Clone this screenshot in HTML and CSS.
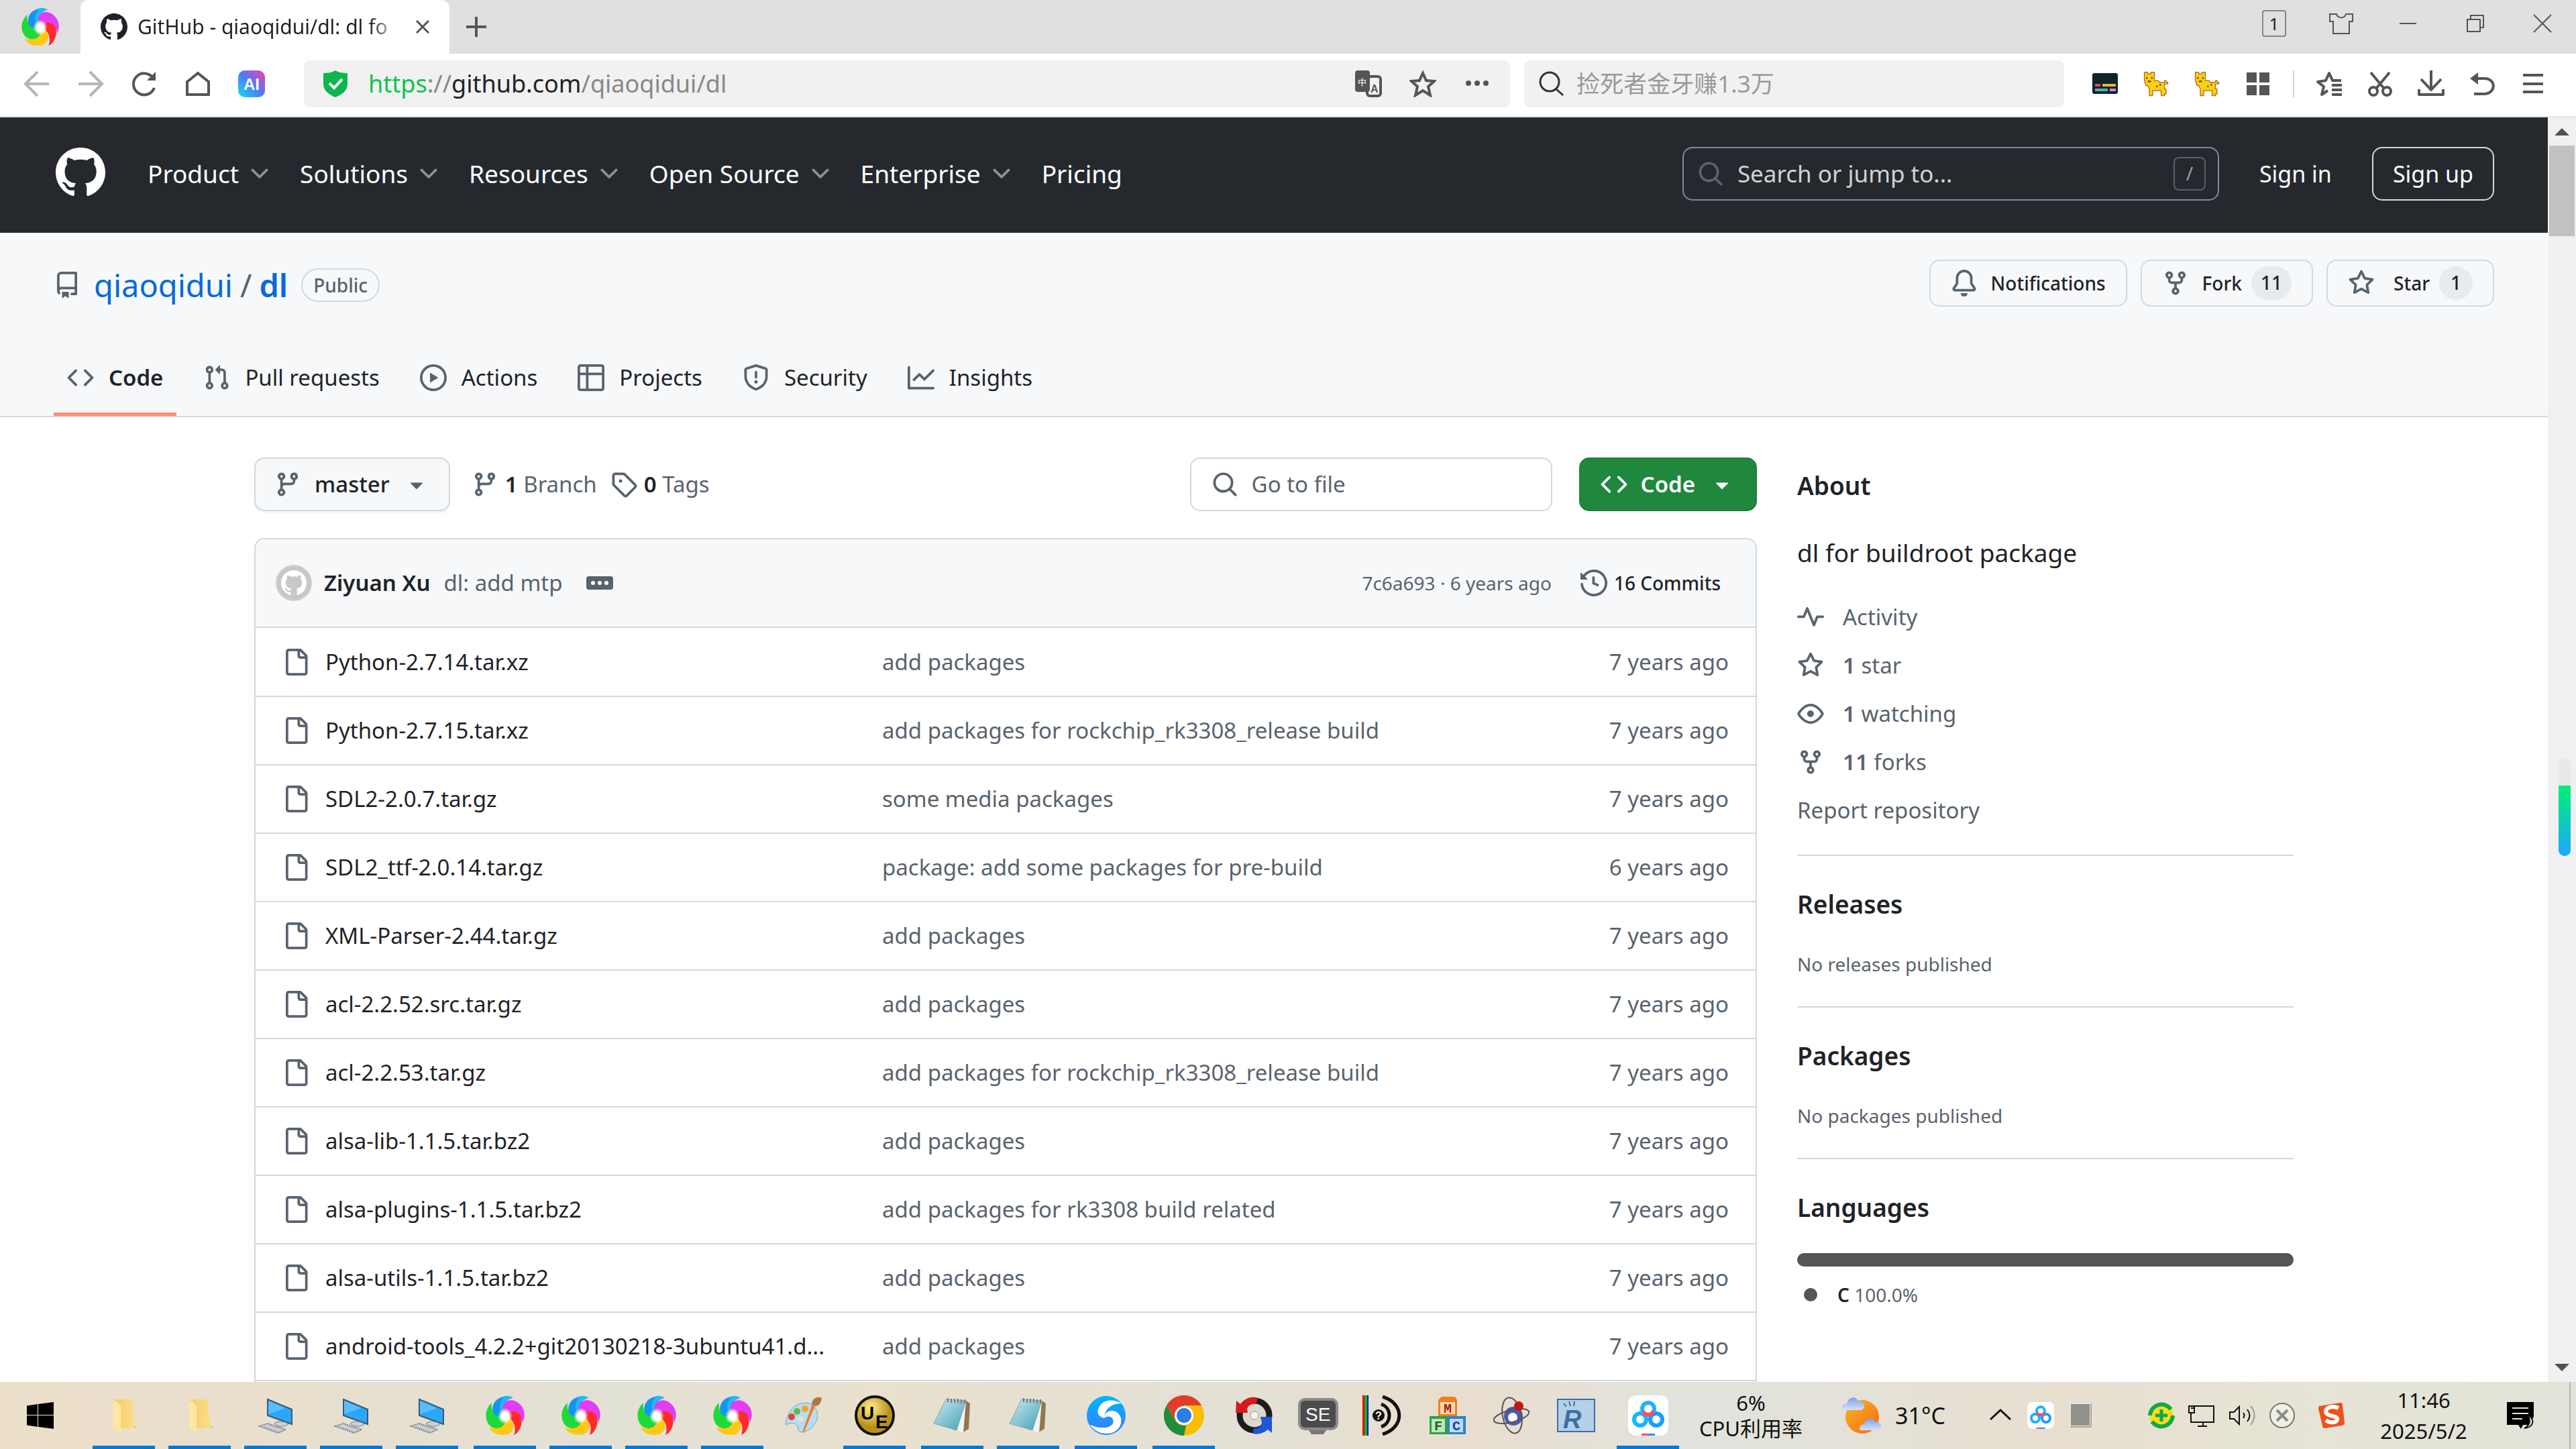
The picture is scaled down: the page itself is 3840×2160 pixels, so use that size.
FILE: index.html
```html
<!DOCTYPE html>
<html lang="en">
<head>
  <meta charset="UTF-8">
  <title>GitHub - qiaoqidui/dl: dl for buildroot package</title>
  <link rel="stylesheet" href="styles.css">
</head>
<body>
  <!-- icon sprite -->
  <svg class="sprite" aria-hidden="true">
    <defs>
      <linearGradient id="gAi" x1="0" y1="1" x2="1" y2="0"><stop offset="0" stop-color="#12e0f5"/><stop offset=".5" stop-color="#4a7cf5"/><stop offset="1" stop-color="#ff3cac"/></linearGradient>
      <linearGradient id="gFolder"><stop offset="0" stop-color="#f3cd6b"/><stop offset="1" stop-color="#fbdf85"/></linearGradient>
      <linearGradient id="gSun" x1="0" y1="0" x2="1" y2="1"><stop offset="0" stop-color="#f5b42a"/><stop offset="1" stop-color="#f96a0c"/></linearGradient>
      <linearGradient id="gCloud" x1="0" y1="0" x2="0" y2="1"><stop offset="0" stop-color="#7fa0e6"/><stop offset="1" stop-color="#d4e2fb"/></linearGradient>
      <linearGradient id="gNote" x1="0" y1="0" x2="1" y2="1"><stop offset="0" stop-color="#cfeaf0"/><stop offset="1" stop-color="#3f9fb5"/></linearGradient>
      <linearGradient id="gBird" x1="0" y1="0" x2="0" y2="1"><stop offset="0" stop-color="#00b4ff"/><stop offset="1" stop-color="#3a7dff"/></linearGradient>
      <radialGradient id="gUe" cx=".4" cy=".3"><stop offset="0" stop-color="#fff08a"/><stop offset="1" stop-color="#b8901c"/></radialGradient>
      <radialGradient id="gCore"><stop offset="0" stop-color="#fff"/><stop offset=".5" stop-color="#fff"/><stop offset="1" stop-color="#fff" stop-opacity="0"/></radialGradient>
    </defs>
    <symbol id="mark" viewBox="0 0 16 16"><path d="M8 0c4.42 0 8 3.58 8 8a8.013 8.013 0 0 1-5.45 7.59c-.4.08-.55-.17-.55-.38 0-.27.01-1.13.01-2.2 0-.75-.25-1.23-.54-1.48 1.78-.2 3.65-.88 3.65-3.95 0-.88-.31-1.59-.82-2.15.08-.2.36-1.02-.08-2.12 0 0-.67-.22-2.2.82-.64-.18-1.32-.27-2-.27-.68 0-1.36.09-2 .27-1.53-1.03-2.2-.82-2.2-.82-.44 1.1-.16 1.92-.08 2.12-.51.56-.82 1.28-.82 2.15 0 3.06 1.86 3.75 3.64 3.95-.23.2-.44.55-.51 1.07-.46.21-1.61.55-2.33-.66-.15-.24-.6-.83-1.23-.82-.67.01-.27.38.01.53.34.19.73.9.82 1.13.16.45.68 1.31 2.69.94 0 .67.01 1.3.01 1.49 0 .21-.15.45-.55.38A7.995 7.995 0 0 1 0 8c0-4.42 3.58-8 8-8Z"/></symbol>
    <symbol id="repo" viewBox="0 0 16 16"><path d="M2 2.5A2.5 2.5 0 0 1 4.5 0h8.75a.75.75 0 0 1 .75.75v12.5a.75.75 0 0 1-.75.75h-2.5a.75.75 0 0 1 0-1.5h1.75v-2h-8a1 1 0 0 0-.714 1.7.75.75 0 1 1-1.072 1.05A2.495 2.495 0 0 1 2 11.5Zm10.5-1h-8a1 1 0 0 0-1 1v6.708A2.486 2.486 0 0 1 4.5 9h8ZM5 12.25a.25.25 0 0 1 .25-.25h3.5a.25.25 0 0 1 .25.25v3.25a.25.25 0 0 1-.4.2l-1.45-1.087a.249.249 0 0 0-.3 0L5.4 15.7a.25.25 0 0 1-.4-.2Z"/></symbol>
    <symbol id="code" viewBox="0 0 16 16"><path d="m11.28 3.22 4.25 4.25a.75.75 0 0 1 0 1.06l-4.25 4.25a.749.749 0 0 1-1.275-.326.749.749 0 0 1 .215-.734L13.94 8l-3.72-3.72a.749.749 0 0 1 .326-1.275.749.749 0 0 1 .734.215Zm-6.56 0a.751.751 0 0 1 1.042.018.751.751 0 0 1 .018 1.042L2.06 8l3.72 3.72a.749.749 0 0 1-.326 1.275.749.749 0 0 1-.734-.215L.47 8.53a.75.75 0 0 1 0-1.06Z"/></symbol>
    <symbol id="pull" viewBox="0 0 16 16"><path d="M1.5 3.25a2.25 2.25 0 1 1 3 2.122v5.256a2.251 2.251 0 1 1-1.5 0V5.372A2.25 2.25 0 0 1 1.5 3.25Zm5.677-.177L9.573.677A.25.25 0 0 1 10 .854V2.5h1A2.5 2.5 0 0 1 13.5 5v5.628a2.251 2.251 0 1 1-1.5 0V5a1 1 0 0 0-1-1h-1v1.646a.25.25 0 0 1-.427.177L7.177 3.427a.25.25 0 0 1 0-.354ZM3.75 2.5a.75.75 0 1 0 0 1.5.75.75 0 0 0 0-1.5Zm0 9.5a.75.75 0 1 0 0 1.5.75.75 0 0 0 0-1.5Zm8.25.75a.75.75 0 1 0 1.5 0 .75.75 0 0 0-1.5 0Z"/></symbol>
    <symbol id="play" viewBox="0 0 16 16"><path d="M8 0a8 8 0 1 1 0 16A8 8 0 0 1 8 0ZM1.5 8a6.5 6.5 0 1 0 13 0 6.5 6.5 0 0 0-13 0Zm4.879-2.773 4.264 2.559a.25.25 0 0 1 0 .428l-4.264 2.559A.25.25 0 0 1 6 10.559V5.442a.25.25 0 0 1 .379-.215Z"/></symbol>
    <symbol id="table" viewBox="0 0 16 16"><path d="M0 1.75C0 .784.784 0 1.75 0h12.5C15.216 0 16 .784 16 1.75v12.5A1.75 1.75 0 0 1 14.25 16H1.75A1.75 1.75 0 0 1 0 14.25ZM6.5 6.5v8h7.75a.25.25 0 0 0 .25-.25V6.5Zm8-1.5V1.75a.25.25 0 0 0-.25-.25H6.5V5Zm-13 1.5v7.75c0 .138.112.25.25.25H5v-8ZM5 5V1.5H1.75a.25.25 0 0 0-.25.25V5Z"/></symbol>
    <symbol id="shield" viewBox="0 0 16 16"><path d="M7.467.133a1.748 1.748 0 0 1 1.066 0l5.25 1.68A1.75 1.75 0 0 1 15 3.48V7c0 1.566-.32 3.182-1.303 4.682-.983 1.498-2.585 2.813-5.032 3.855a1.697 1.697 0 0 1-1.33 0c-2.447-1.042-4.049-2.357-5.032-3.855C1.32 10.182 1 8.566 1 7V3.48a1.75 1.75 0 0 1 1.217-1.667Zm.61 1.429a.25.25 0 0 0-.153 0l-5.25 1.68a.25.25 0 0 0-.174.238V7c0 1.358.275 2.666 1.057 3.86.784 1.194 2.121 2.34 4.366 3.297a.196.196 0 0 0 .154 0c2.245-.956 3.582-2.104 4.366-3.298C13.225 9.666 13.5 8.36 13.5 7V3.48a.251.251 0 0 0-.174-.237l-5.25-1.68ZM8.75 4.75v3a.75.75 0 0 1-1.5 0v-3a.75.75 0 0 1 1.5 0ZM9 10.5a1 1 0 1 1-2 0 1 1 0 0 1 2 0Z"/></symbol>
    <symbol id="graph" viewBox="0 0 16 16"><path d="M1.5 1.75V13.5h13.75a.75.75 0 0 1 0 1.5H.75a.75.75 0 0 1-.75-.75V1.75a.75.75 0 0 1 1.5 0Zm14.28 2.53-5.25 5.25a.75.75 0 0 1-1.06 0L7 7.06 4.28 9.78a.751.751 0 0 1-1.042-.018.751.751 0 0 1-.018-1.042l3.25-3.25a.75.75 0 0 1 1.06 0L10 7.94l4.72-4.72a.751.751 0 0 1 1.042.018.751.751 0 0 1 .018 1.042Z"/></symbol>
    <symbol id="bell" viewBox="0 0 16 16"><path d="M8 16a2 2 0 0 0 1.985-1.75c.017-.137-.097-.25-.235-.25h-3.5c-.138 0-.252.113-.235.25A2 2 0 0 0 8 16ZM3 5a5 5 0 0 1 10 0v2.947c0 .05.015.098.042.139l1.703 2.555A1.519 1.519 0 0 1 13.482 13H2.518a1.516 1.516 0 0 1-1.263-2.36l1.703-2.554A.255.255 0 0 0 3 7.947Zm5-3.5A3.5 3.5 0 0 0 4.5 5v2.947c0 .346-.102.683-.294.97l-1.703 2.556a.017.017 0 0 0-.003.01l.001.006c0 .002.002.004.004.006l.006.004.007.001h10.964l.007-.001.006-.004.004-.006.001-.007a.017.017 0 0 0-.003-.01l-1.703-2.554a1.745 1.745 0 0 1-.294-.97V5A3.5 3.5 0 0 0 8 1.5Z"/></symbol>
    <symbol id="fork" viewBox="0 0 16 16"><path d="M5 5.372v.878c0 .414.336.75.75.75h4.5a.75.75 0 0 0 .75-.75v-.878a2.25 2.25 0 1 1 1.5 0v.878a2.25 2.25 0 0 1-2.25 2.25h-1.5v2.128a2.251 2.251 0 1 1-1.5 0V8.5h-1.5A2.25 2.25 0 0 1 3.5 6.25v-.878a2.25 2.25 0 1 1 1.5 0ZM5 3.25a.75.75 0 1 0-1.5 0 .75.75 0 0 0 1.5 0Zm6.75.75a.75.75 0 1 0 0-1.5.75.75 0 0 0 0 1.5Zm-3 8.75a.75.75 0 1 0-1.5 0 .75.75 0 0 0 1.5 0Z"/></symbol>
    <symbol id="star" viewBox="0 0 16 16"><path d="M8 .25a.75.75 0 0 1 .673.418l1.882 3.815 4.21.612a.75.75 0 0 1 .416 1.279l-3.046 2.97.719 4.192a.751.751 0 0 1-1.088.791L8 12.347l-3.766 1.98a.75.75 0 0 1-1.088-.79l.72-4.194L.818 6.374a.75.75 0 0 1 .416-1.28l4.21-.611L7.327.668A.75.75 0 0 1 8 .25Zm0 2.445L6.615 5.5a.75.75 0 0 1-.564.41l-3.097.45 2.24 2.184a.75.75 0 0 1 .216.664l-.528 3.084 2.769-1.456a.75.75 0 0 1 .698 0l2.77 1.456-.53-3.084a.75.75 0 0 1 .216-.664l2.24-2.183-3.096-.45a.75.75 0 0 1-.564-.41L8 2.694Z"/></symbol>
    <symbol id="branch" viewBox="0 0 16 16"><path d="M9.5 3.25a2.25 2.25 0 1 1 3 2.122V6A2.5 2.5 0 0 1 10 8.5H6a1 1 0 0 0-1 1v1.128a2.251 2.251 0 1 1-1.5 0V5.372a2.25 2.25 0 1 1 1.5 0v1.836A2.493 2.493 0 0 1 6 7h4a1 1 0 0 0 1-1v-.628A2.25 2.25 0 0 1 9.5 3.25Zm-6 0a.75.75 0 1 0 1.5 0 .75.75 0 0 0-1.5 0Zm8.25-.75a.75.75 0 1 0 0 1.5.75.75 0 0 0 0-1.5ZM4.25 12a.75.75 0 1 0 0 1.5.75.75 0 0 0 0-1.5Z"/></symbol>
    <symbol id="tag" viewBox="0 0 16 16"><path d="M1 7.775V2.75C1 1.784 1.784 1 2.75 1h5.025c.464 0 .91.184 1.238.513l6.25 6.25a1.75 1.75 0 0 1 0 2.474l-5.026 5.026a1.75 1.75 0 0 1-2.474 0l-6.25-6.25A1.752 1.752 0 0 1 1 7.775Zm1.5 0c0 .066.026.13.073.177l6.25 6.25a.25.25 0 0 0 .354 0l5.025-5.025a.25.25 0 0 0 0-.354l-6.25-6.25a.25.25 0 0 0-.177-.073H2.75a.25.25 0 0 0-.25.25ZM6 5a1 1 0 1 1 0 2 1 1 0 0 1 0-2Z"/></symbol>
    <symbol id="search" viewBox="0 0 16 16"><path d="M10.68 11.74a6 6 0 0 1-7.922-8.982 6 6 0 0 1 8.982 7.922l3.04 3.04a.749.749 0 0 1-.326 1.275.749.749 0 0 1-.734-.215ZM11.5 7a4.499 4.499 0 1 0-8.997 0A4.499 4.499 0 0 0 11.5 7Z"/></symbol>
    <symbol id="caret" viewBox="0 0 16 16"><path d="m4.427 7.427 3.396 3.396a.25.25 0 0 0 .354 0l3.396-3.396A.25.25 0 0 0 11.396 7H4.604a.25.25 0 0 0-.177.427Z"/></symbol>
    <symbol id="chevron" viewBox="0 0 16 16"><path d="M12.78 5.22a.749.749 0 0 1 0 1.06l-4.25 4.25a.749.749 0 0 1-1.06 0L3.22 6.28a.749.749 0 1 1 1.06-1.06L8 8.939l3.72-3.719a.749.749 0 0 1 1.06 0Z"/></symbol>
    <symbol id="file" viewBox="0 0 16 16"><path d="M2 1.75C2 .784 2.784 0 3.75 0h6.586c.464 0 .909.184 1.237.513l2.914 2.914c.329.328.513.773.513 1.237v9.586A1.75 1.75 0 0 1 13.25 16h-9.5A1.75 1.75 0 0 1 2 14.25Zm1.75-.25a.25.25 0 0 0-.25.25v12.5c0 .138.112.25.25.25h9.5a.25.25 0 0 0 .25-.25V6h-2.75A1.75 1.75 0 0 1 9 4.25V1.5Zm6.75.062V4.25c0 .138.112.25.25.25h2.688l-.011-.013-2.914-2.914-.013-.011Z"/></symbol>
    <symbol id="history" viewBox="0 0 16 16"><path d="m.427 1.927 1.215 1.215a8.002 8.002 0 1 1-1.6 5.685.75.75 0 1 1 1.493-.154 6.5 6.5 0 1 0 1.18-4.458l1.358 1.358A.25.25 0 0 1 3.896 6H.25A.25.25 0 0 1 0 5.75V2.104a.25.25 0 0 1 .427-.177ZM7.75 4a.75.75 0 0 1 .75.75v2.992l2.028.812a.75.75 0 0 1-.557 1.392l-2.5-1A.751.751 0 0 1 7 8.25v-3.5A.75.75 0 0 1 7.75 4Z"/></symbol>
    <symbol id="pulse" viewBox="0 0 16 16"><path d="M6 2c.306 0 .582.187.696.471L10 10.731l1.304-3.26A.751.751 0 0 1 12 7h3.25a.75.75 0 0 1 0 1.5h-2.742l-1.812 4.528a.751.751 0 0 1-1.392 0L6 4.77 4.696 8.03A.75.75 0 0 1 4 8.5H.75a.75.75 0 0 1 0-1.5h2.742l1.812-4.529A.751.751 0 0 1 6 2Z"/></symbol>
    <symbol id="eye" viewBox="0 0 16 16"><path d="M8 2c1.981 0 3.671.992 4.933 2.078 1.27 1.091 2.187 2.345 2.637 3.023a1.62 1.62 0 0 1 0 1.798c-.45.678-1.367 1.932-2.637 3.023C11.67 13.008 9.981 14 8 14c-1.981 0-3.671-.992-4.933-2.078C1.797 10.83.88 9.576.43 8.898a1.62 1.62 0 0 1 0-1.798c.45-.677 1.367-1.931 2.637-3.022C4.33 2.992 6.019 2 8 2ZM1.679 7.932a.12.12 0 0 0 0 .136c.411.622 1.241 1.75 2.366 2.717C5.176 11.758 6.527 12.5 8 12.5c1.473 0 2.825-.742 3.955-1.715 1.124-.967 1.954-2.096 2.366-2.717a.12.12 0 0 0 0-.136c-.412-.621-1.242-1.75-2.366-2.717C10.824 4.242 9.473 3.5 8 3.5c-1.473 0-2.825.742-3.955 1.715-1.124.967-1.954 2.096-2.366 2.717ZM8 10a2 2 0 1 1-.001-3.999A2 2 0 0 1 8 10Z"/></symbol>

    <symbol id="swirl" viewBox="0 0 60 60">
      <path d="M30 30C14 16 12 8 24 3 32-1 38 1 42 4 30 6 26 16 30 30Z" fill="#27b6f5"/>
      <path d="M30 30C22 16 30 4 44 8 58 14 62 28 56 40 54 28 44 20 30 30Z" fill="#e33cf5"/>
      <path d="M30 30C44 16 58 28 54 44 52 52 48 57 43 59 47 48 44 36 30 30Z" fill="#ff2a2a"/>
      <path d="M30 30C46 36 46 52 34 58 22 61 10 57 6 48 20 52 30 44 30 30Z" fill="#ffc814"/>
      <path d="M30 30C34 46 20 54 8 46-2 36 0 20 10 11 8 24 16 34 30 30Z" fill="#1fd83a"/>
      <path d="M30 30C12 36 6 20 16 8 20 4 24 3 28 3 20 12 20 24 30 30Z" fill="#1595f0"/>
      <ellipse cx="30" cy="31" rx="11" ry="12" fill="url(#gCore)"/>
    </symbol>
    <symbol id="folder" viewBox="0 0 60 60">
      <path d="M14 6h29v27l3 2v14H14Z" fill="url(#gFolder)"/>
      <path d="M14 6 25 15v41L14 48Z" fill="#ffe7a3"/>
      <path d="M46 46l3 1-3 2Z" fill="#c9b68a"/>
    </symbol>
    <symbol id="pc" viewBox="0 0 60 60">
      <path d="M18 6 54 21v22L18 30Z" fill="#29a7fb" stroke="#3d5873" stroke-width="2"/>
      <path d="M19 8 45 19 19 28Z" fill="#59bdfd"/>
      <path d="M28 42c4-4 14-4 20 0 2 3-6 5-14 4Z" fill="#c9d0d6" stroke="#76818c"/>
      <path d="M6 46 18 42 45 51 34 56Z" fill="#d9dde1" stroke="#777f87" stroke-width="2" stroke-dasharray="2 1"/>
      <path d="m13 46 23 8m-18-10 22 8" stroke="#9aa2aa" stroke-width="1"/>
    </symbol>
    <symbol id="notepad" viewBox="0 0 60 60">
      <path d="M50 8 56 12 54 50 44 56Z" fill="#93764a"/>
      <path d="M20 6 50 8 46 56 38 52Z" fill="#eef4f4"/>
      <path d="M20 6 50 8 36 52 2 42Z" fill="url(#gNote)" stroke="#7ea5ab"/>
      <path d="M23 4v6m5-5v6m5-6v6m5-6v6m5-5v6m5-6v6" stroke="#777" stroke-width="2"/>
    </symbol>
    <symbol id="baidu" viewBox="0 0 60 60">
      <rect width="60" height="60" rx="12" fill="#fff"/>
      <g fill="none" stroke-width="6"><circle cx="30" cy="20" r="9" stroke="#1fb0ff"/><circle cx="18" cy="36" r="9" stroke="#12b7ff"/><circle cx="42" cy="36" r="9" stroke="#1a9cff"/><path d="M22 24a9 9 0 0 0 16 0" stroke="#ff4a6e"/></g>
      <path d="M20 57h10v3H20z" fill="#ff4a6e"/><path d="M30 57h10v3H30z" fill="#2a8cff"/>
    </symbol>
    <symbol id="cat" viewBox="0 0 16 16">
      <path d="M1 1h2v1h2V1h2v5h2l1 1h3V6h1v1h1v1h-2v3h1v3h-1v1h-2v-3H6v3H4v-4L3 9H2L1 6Z" fill="#f9d20c" stroke="#a8682e" stroke-width=".5"/>
      <path d="M2 4h1v1H2zM5 4h1v1H5zM3 6h2v1H3zM8 9h1v1H8zM10 8h1v1h-1z" fill="#8a4a1c" stroke="none"/>
    </symbol>
  </svg>

  <div class="tabstrip">
    <button class="brand" aria-label="Browser menu"><svg><use href="#swirl"/></svg></button>
    <div class="tab">
      <svg class="tab-icon"><use href="#mark"/></svg>
      <span class="tab-title">GitHub - qiaoqidui/dl: dl fo</span>
      <button class="tab-close" aria-label="Close tab"><svg viewBox="0 0 20 20"><path d="m1 1 18 18M19 1 1 19"/></svg></button>
    </div>
    <button class="new-tab" aria-label="New tab"><svg viewBox="0 0 30 30"><path d="M15 0v30M0 15h30"/></svg></button>
    <div class="window-buttons">
      <button class="tab-count">1</button>
      <button aria-label="Skins"><svg viewBox="0 0 36 36"><path d="M1 4h10c2 7 12 7 14 0h10v11h-5v18H6V15H1Z"/></svg></button>
      <button aria-label="Minimize"><svg viewBox="0 0 36 36"><path d="M5 18h25"/></svg></button>
      <button aria-label="Restore"><svg viewBox="0 0 36 36"><path d="M6 12h19v18H6zM11 12V6h19v18h-5"/></svg></button>
      <button aria-label="Close"><svg viewBox="0 0 36 36"><path d="m5 5 26 26M31 5 5 31"/></svg></button>
    </div>
  </div>

  <div class="toolbar">
    <div class="nav-buttons">
      <button class="off" aria-label="Back"><svg viewBox="0 0 40 40"><path d="M38 20H4M21 2 3 20l18 18"/></svg></button>
      <button class="off" aria-label="Forward"><svg viewBox="0 0 40 40"><path d="M2 20h34M19 2l18 18-18 18"/></svg></button>
      <button aria-label="Reload"><svg viewBox="0 0 40 40"><path d="M35 26A16 16 0 1 1 33 11"/><path d="M37 2v13H24Z" class="solid"/></svg></button>
      <button aria-label="Home"><svg viewBox="0 0 40 40"><path d="M4 17 20 4l16 13v19H4Z"/></svg></button>
      <button aria-label="AI"><svg viewBox="0 0 40 40"><rect width="40" height="40" rx="10" fill="url(#gAi)" stroke="none"/><text x="8" y="29" class="ai-letter">AI</text></svg></button>
    </div>
    <div class="address">
      <svg class="secure" viewBox="0 0 36 40"><path d="M18 0c5 3 11 4 18 4v16c0 10-8 16-18 20C8 36 0 30 0 20V4c7 0 13-1 18-4Z" fill="#0cb84e"/><path d="m9 19 7 7 12-13" fill="none" stroke="#fff" stroke-width="4"/></svg>
      <span class="url"><span class="scheme">https</span>://<span class="host">github.com</span>/qiaoqidui/dl</span>
      <button aria-label="Translate"><svg viewBox="0 0 40 40"><rect x="18" y="9" width="20" height="29" rx="4"/><rect width="22" height="32" rx="4" class="solid"/><text x="4" y="22" class="tr-zh">中</text><text x="23" y="33" class="tr-en">A</text></svg></button>
      <button aria-label="Bookmark"><svg viewBox="0 0 40 40"><path d="m20 4 5 11 12 1-9 8 3 13-11-7-11 7 3-13-9-8 12-1Z"/></svg></button>
      <button aria-label="More"><svg viewBox="0 0 40 40"><g class="solid"><circle cx="7" cy="19" r="4"/><circle cx="20" cy="19" r="4"/><circle cx="33" cy="19" r="4"/></g></svg></button>
    </div>
    <div class="websearch">
      <svg viewBox="0 0 40 40"><circle cx="18" cy="17" r="14"/><path d="m28 28 10 9"/></svg>
      <input type="text" aria-label="Web search" placeholder="捡死者金牙赚1.3万">
    </div>
    <div class="extensions">
      <button aria-label="Terminal"><svg viewBox="0 0 40 40"><g stroke="none"><rect x="1" y="4" width="38" height="31" rx="3" fill="#10232b"/><path d="M5 20h8v4H5z" fill="#e5484d"/><path d="M16 20h20v4H16z" fill="#efb434"/><path d="M5 27h19v4H5z" fill="#4bb5ae"/><path d="M27 27h9v4h-9z" fill="#c98bd0"/></g></svg></button>
      <button aria-label="Cat"><svg><use href="#cat"/></svg></button>
      <button aria-label="Cat"><svg><use href="#cat"/></svg></button>
      <button aria-label="Apps"><svg viewBox="0 0 40 40"><path class="solid" d="M3 3h15v15H3zM22 3h15v15H22zM3 22h15v15H3zM22 22h15v15H22z"/></svg></button>
      <span class="divider"></span>
      <button aria-label="Favorites"><svg viewBox="0 0 40 40"><path d="M38 15H25L20 4l-5 11-12 2 9 7-3 12 9-6M24 22h15M24 29h15M24 36h15"/></svg></button>
      <button aria-label="Cut"><svg viewBox="0 0 40 40"><path d="m6 3 20 24M34 3 14 27"/><circle cx="10" cy="31" r="6"/><circle cx="30" cy="31" r="6"/></svg></button>
      <button aria-label="Downloads"><svg viewBox="0 0 40 40"><path d="M20 0v28M5 13l15 16 15-16M2 28v8h36v-8"/></svg></button>
      <button aria-label="Undo"><svg viewBox="0 0 40 40"><path d="M8 35h16c18-2 16-23 0-23H7"/><path class="solid" d="M14 3v18L2 12Z"/></svg></button>
      <button aria-label="Menu"><svg viewBox="0 0 40 40"><path d="M5 7h30M5 20h30M5 32h30"/></svg></button>
    </div>
  </div>

  <div class="viewport">
    <div class="page">
      <header class="site-header">
        <a href="#" aria-label="Homepage"><svg class="site-logo"><use href="#mark"/></svg></a>
        <nav class="site-nav">
          <button>Product<svg><use href="#chevron"/></svg></button>
          <button>Solutions<svg><use href="#chevron"/></svg></button>
          <button>Resources<svg><use href="#chevron"/></svg></button>
          <button>Open Source<svg><use href="#chevron"/></svg></button>
          <button>Enterprise<svg><use href="#chevron"/></svg></button>
          <a href="#">Pricing</a>
        </nav>
        <button class="jump"><svg class="icon"><use href="#search"/></svg><span>Search or jump to...</span><kbd>/</kbd></button>
        <a class="sign-in" href="#">Sign in</a>
        <a class="sign-up" href="#">Sign up</a>
      </header>

      <div class="repo-header">
        <div class="repo-top">
          <div class="repo-title">
            <svg class="icon"><use href="#repo"/></svg>
            <a href="#">qiaoqidui</a><span class="slash">/</span><a class="strong" href="#">dl</a>
            <span class="visibility">Public</span>
          </div>
          <div class="repo-actions">
            <a href="#"><svg class="icon"><use href="#bell"/></svg>Notifications</a>
            <a href="#"><svg class="icon"><use href="#fork"/></svg>Fork<span class="counter">11</span></a>
            <a href="#"><svg class="icon"><use href="#star"/></svg><span class="star-label">Star</span><span class="counter">1</span></a>
          </div>
        </div>
        <nav class="repo-tabs">
          <a class="selected" href="#"><svg class="icon"><use href="#code"/></svg>Code</a>
          <a href="#"><svg class="icon"><use href="#pull"/></svg>Pull requests</a>
          <a href="#"><svg class="icon"><use href="#play"/></svg>Actions</a>
          <a href="#"><svg class="icon"><use href="#table"/></svg>Projects</a>
          <a href="#"><svg class="icon"><use href="#shield"/></svg>Security</a>
          <a href="#"><svg class="icon"><use href="#graph"/></svg>Insights</a>
        </nav>
      </div>

      <div class="layout">
        <main>
          <div class="file-nav">
            <button class="branch-btn"><svg class="icon"><use href="#branch"/></svg>master<svg class="icon"><use href="#caret"/></svg></button>
            <a class="ref" href="#"><svg class="icon"><use href="#branch"/></svg><span><strong>1</strong> Branch</span></a>
            <a class="ref" href="#"><svg class="icon"><use href="#tag"/></svg><span><strong>0</strong> Tags</span></a>
            <div class="goto"><svg class="icon"><use href="#search"/></svg><input type="text" aria-label="Go to file" placeholder="Go to file"></div>
            <button class="code-btn"><svg class="icon"><use href="#code"/></svg>Code<svg class="icon"><use href="#caret"/></svg></button>
          </div>

          <div class="files">
            <div class="commit">
              <span class="avatar"><svg><use href="#mark"/></svg></span>
              <a class="author" href="#">Ziyuan Xu</a>
              <a class="message" href="#">dl: add mtp</a>
              <button class="dots" aria-label="Open commit details"><svg viewBox="0 0 40 20"><circle cx="10" cy="10" r="3"/><circle cx="20" cy="10" r="3"/><circle cx="30" cy="10" r="3"/></svg></button>
              <span class="sha">7c6a693 · 6 years ago</span>
              <a class="commits" href="#"><svg class="icon"><use href="#history"/></svg>16 Commits</a>
            </div>
            <table>
              <tr><td><a href="#"><svg class="icon"><use href="#file"/></svg><span>Python-2.7.14.tar.xz</span></a></td><td>add packages</td><td>7 years ago</td></tr>
              <tr><td><a href="#"><svg class="icon"><use href="#file"/></svg><span>Python-2.7.15.tar.xz</span></a></td><td>add packages for rockchip_rk3308_release build</td><td>7 years ago</td></tr>
              <tr><td><a href="#"><svg class="icon"><use href="#file"/></svg><span>SDL2-2.0.7.tar.gz</span></a></td><td>some media packages</td><td>7 years ago</td></tr>
              <tr><td><a href="#"><svg class="icon"><use href="#file"/></svg><span>SDL2_ttf-2.0.14.tar.gz</span></a></td><td>package: add some packages for pre-build</td><td>6 years ago</td></tr>
              <tr><td><a href="#"><svg class="icon"><use href="#file"/></svg><span>XML-Parser-2.44.tar.gz</span></a></td><td>add packages</td><td>7 years ago</td></tr>
              <tr><td><a href="#"><svg class="icon"><use href="#file"/></svg><span>acl-2.2.52.src.tar.gz</span></a></td><td>add packages</td><td>7 years ago</td></tr>
              <tr><td><a href="#"><svg class="icon"><use href="#file"/></svg><span>acl-2.2.53.tar.gz</span></a></td><td>add packages for rockchip_rk3308_release build</td><td>7 years ago</td></tr>
              <tr><td><a href="#"><svg class="icon"><use href="#file"/></svg><span>alsa-lib-1.1.5.tar.bz2</span></a></td><td>add packages</td><td>7 years ago</td></tr>
              <tr><td><a href="#"><svg class="icon"><use href="#file"/></svg><span>alsa-plugins-1.1.5.tar.bz2</span></a></td><td>add packages for rk3308 build related</td><td>7 years ago</td></tr>
              <tr><td><a href="#"><svg class="icon"><use href="#file"/></svg><span>alsa-utils-1.1.5.tar.bz2</span></a></td><td>add packages</td><td>7 years ago</td></tr>
              <tr><td><a href="#"><svg class="icon"><use href="#file"/></svg><span>android-tools_4.2.2+git20130218-3ubuntu41.d...</span></a></td><td>add packages</td><td>7 years ago</td></tr>
              <tr><td></td><td></td><td></td></tr>
            </table>
          </div>
        </main>

        <aside>
          <section>
            <h2>About</h2>
            <p class="about">dl for buildroot package</p>
            <ul>
              <li><a href="#"><svg class="icon"><use href="#pulse"/></svg>Activity</a></li>
              <li><a href="#"><svg class="icon"><use href="#star"/></svg><span><strong>1</strong> star</span></a></li>
              <li><a href="#"><svg class="icon"><use href="#eye"/></svg><span><strong>1</strong> watching</span></a></li>
              <li><a href="#"><svg class="icon"><use href="#fork"/></svg><span><strong>11</strong> forks</span></a></li>
              <li><a href="#">Report repository</a></li>
            </ul>
          </section>
          <section>
            <h2>Releases</h2>
            <p>No releases published</p>
          </section>
          <section>
            <h2>Packages</h2>
            <p>No packages published</p>
          </section>
          <section>
            <h2>Languages</h2>
            <div class="lang-bar"></div>
            <a class="lang" href="#"><span class="lang-dot"></span><span><strong>C</strong> 100.0%</span></a>
          </section>
        </aside>
      </div>
    </div>

    <div class="scrollbar">
      <svg viewBox="0 0 42 42"><path d="M10 27h22L21 16Z"/></svg>
      <div class="thumb"></div>
      <svg class="down" viewBox="0 0 42 42"><path d="M10 15h22L21 26Z"/></svg>
    </div>
    <div class="meter"><div class="meter-fill"></div></div>
  </div>

  <footer class="taskbar">
    <button class="start" aria-label="Start"><svg viewBox="0 0 40 40"><path d="M0 5.500 16 3v16H0ZM17 3 40 0v19H17ZM0 20h16v17L0 34.500ZM17 20h23v20l-23-3Z"/></svg></button>
    <div class="apps">
      <button class="app on" aria-label="Folder"><svg><use href="#folder"/></svg></button>
      <button class="app on" aria-label="Folder"><svg><use href="#folder"/></svg></button>
      <button class="app on" aria-label="Remote desktop"><svg><use href="#pc"/></svg></button>
      <button class="app on" aria-label="Remote desktop"><svg><use href="#pc"/></svg></button>
      <button class="app on" aria-label="Remote desktop"><svg><use href="#pc"/></svg></button>
      <button class="app on first" aria-label="Browser"><svg><use href="#swirl"/></svg></button>
      <button class="app on" aria-label="Browser"><svg><use href="#swirl"/></svg></button>
      <button class="app on" aria-label="Browser"><svg><use href="#swirl"/></svg></button>
      <button class="app on" aria-label="Browser"><svg><use href="#swirl"/></svg></button>
      <button class="app" aria-label="Paint">
        <svg viewBox="0 0 60 60">
          <path d="M5 44C7 20 24 8 40 12 56 18 56 38 44 48 36 55 24 58 24 50 24 44 18 38 5 44Z" fill="#b9dcf2" stroke="#6ca6cc"/>
          <circle cx="14" cy="32" r="5" fill="#e2453c"/><circle cx="22" cy="24" r="5" fill="#66b845"/><circle cx="34" cy="20" r="5" fill="#f2a91e"/><circle cx="28" cy="35" r="4" fill="#e9e2d2"/>
          <path d="M50 14 32 56l-2-1L45 12Z" fill="#e8842e"/><path d="M44 13C44 6 52 0 59 4 58 12 54 16 50 16Z" fill="#a9794c"/>
        </svg>
      </button>
      <button class="app on first" aria-label="UltraEdit">
        <svg viewBox="0 0 60 60">
          <circle cx="30" cy="30" r="28" fill="url(#gUe)" stroke="#111" stroke-width="4"/>
          <text x="9" y="36" class="ue-letter">U</text><text x="31" y="49" class="ue-letter">E</text>
        </svg>
      </button>
      <button class="app on first" aria-label="Notepad"><svg><use href="#notepad"/></svg></button>
      <button class="app on" aria-label="Notepad"><svg><use href="#notepad"/></svg></button>
      <button class="app on first" aria-label="Mail">
        <svg viewBox="0 0 60 60">
          <circle cx="30" cy="30" r="29" fill="url(#gBird)"/>
          <path d="M18 21C22 8 36 3 53 12 40 12 31 17 27 30 32 20 48 20 52 34 54 46 46 55 34 57 20 58 10 51 6 44 20 50 35 50 40 42 43 33 34 28 27 34 20 32 16 28 18 21Z" fill="#fff"/>
        </svg>
      </button>
      <button class="app on first" aria-label="Chrome">
        <svg viewBox="0 0 60 60">
          <circle cx="30" cy="30" r="30" fill="#fbbc04"/>
          <path d="M4 15A30 30 0 0 1 56 15H30L17 37Z" fill="#e33b2e"/>
          <path d="M4 15 17 37.500A15 15 0 0 0 33 45L30 60A30 30 0 0 1 4 15Z" fill="#1e8e3e"/>
          <circle cx="30" cy="30" r="14" fill="#fff"/><circle cx="30" cy="30" r="11" fill="#2b7de9"/>
        </svg>
      </button>
      <button class="app" aria-label="Sync">
        <svg viewBox="0 0 60 60">
          <circle cx="31" cy="30" r="22" fill="#ddd8cc" stroke="#1c1c1c" stroke-width="9"/>
          <circle cx="31" cy="30" r="6" fill="#f5f5f0" stroke="#999"/>
          <path d="M4 8l6 5C18 3 28 1 36 4L33 13C26 12 22 15 20 20l1 6H3Z" fill="#d71a1c"/>
          <path d="M57 56l-6-5C44 57 36 59 28 57l2-8c6 1 10-2 12-8l-2-9h17Z" fill="#1d56d6"/>
        </svg>
      </button>
      <button class="app" aria-label="SE">
        <svg viewBox="0 0 60 60">
          <rect x="2" y="6" width="56" height="44" rx="8" fill="#4c4c4c" stroke="#8b8b8b" stroke-width="4"/><path d="M16 52h26l-4 6H20Z" fill="#777"/>
          <text x="11" y="38" class="se-letter">SE</text>
        </svg>
      </button>
      <button class="app" aria-label="Cast">
        <svg viewBox="0 0 60 60">
          <path fill="#f00" d="M0 0h3v60H0z"/><path fill="#0b0" d="M3 0h4v60H3z"/><path fill="#00f" d="M7 0h2v60H7z"/>
          <circle cx="24" cy="30" r="9" fill="#111"/><text x="19" y="36" class="cast-letter">?</text>
          <path d="M28 13c16 6 16 28 0 34M30 2c33 10 33 46 0 56" fill="none" stroke="#111" stroke-width="5"/>
        </svg>
      </button>
      <button class="app" aria-label="MFC">
        <svg viewBox="0 0 60 60">
          <path d="M17 7l5-5h20l3 5v24H17Z" fill="#f07f23"/><path d="M20 10h22v18H20z" fill="#ffd9a8"/>
          <path d="M4 31h27v27H4Z" fill="#2f9e48"/><path d="M7 35h20v20H7z" fill="#bfe6b8"/>
          <path d="M31 31h27v27H31Z" fill="#2d82d0"/><path d="M34 35h20v20H34z" fill="#bcdcf7"/>
          <text x="25" y="26" class="mfc-letter mfc-m">M</text><text x="11" y="52" class="mfc-letter mfc-f">F</text><text x="38" y="52" class="mfc-letter mfc-c">C</text>
        </svg>
      </button>
      <button class="app" aria-label="Atom">
        <svg viewBox="0 0 60 60">
          <circle cx="33" cy="31" r="14" fill="#4d5cae"/><circle cx="32" cy="33" r="7" fill="#fff"/>
          <g fill="none" stroke="#555" stroke-width="2"><ellipse cx="31" cy="30" rx="14" ry="27" transform="rotate(-12 31 30)"/><ellipse cx="30" cy="31" rx="27" ry="9" transform="rotate(-14 30 31)"/></g>
          <circle cx="41" cy="16" r="7" fill="#c81414"/>
        </svg>
      </button>
      <button class="app" aria-label="R">
        <svg viewBox="0 0 60 60">
          <rect x="3" y="6" width="55" height="48" fill="#b4d0e8" stroke="#3d6ea5" stroke-width="2"/>
          <text x="11" y="49" class="r-letter">R</text><path d="m12 12 4 5m4-8 2 7m6-7-1 7" stroke="#3d6ea5" stroke-width="2"/>
        </svg>
      </button>
      <button class="app on first" aria-label="Netdisk"><svg><use href="#baidu"/></svg></button>
    </div>
    <div class="cpu"><span>6%</span><span>CPU利用率</span></div>
    <div class="weather">
      <svg viewBox="0 0 60 60"><ellipse cx="31" cy="32" rx="25" ry="25" fill="url(#gSun)"/><path d="M2 22c-3-6 2-10 6-9C9 3 22-1 25 9c5-1 9 2 9 7 0 4-3 6-6 6Z" fill="url(#gCloud)"/><path d="M28 52c-3-6 2-9 6-9 1-9 13-12 16-3 5-1 9 2 9 6 0 4-2 6-5 6Z" fill="url(#gCloud)"/></svg>
      <span>31°C</span>
    </div>
    <div class="tray">
      <svg viewBox="0 0 40 40"><path d="m5 26 15-14 15 14" fill="none" stroke="#111" stroke-width="3"/></svg>
      <svg><use href="#baidu"/></svg>
      <svg viewBox="0 0 40 40"><rect x="4" y="2" width="30" height="34" fill="#92928b" stroke="#e8e8e2" stroke-width="2"/><path d="M35 2v35H4" fill="none" stroke="#6c6c66"/></svg>
      <svg class="guard" viewBox="0 0 40 40"><circle cx="20" cy="20" r="18" fill="#fddc1c"/><path d="M3 20A17 17 0 0 1 34 11M37 20A17 17 0 0 1 6 29" fill="none" stroke="#11a84c" stroke-width="6"/><path d="M20 11v18M11 20h18" stroke="#11a84c" stroke-width="5"/></svg>
      <svg viewBox="0 0 40 40"><path d="M10 6h28v24H4V17M22 30v6m-8 0h14M1 6h8v10H1zM4 9h4" fill="none" stroke="#111" stroke-width="2"/></svg>
      <svg viewBox="0 0 40 40"><path d="M2 15h6l8-8v26l-8-8H2Z" fill="none" stroke="#111" stroke-width="2"/><path d="M22 16q3 4 0 8M28 11q7 9 0 18" fill="none" stroke="#111" stroke-width="2"/><path d="M33 6q11 14 0 28" fill="none" stroke="#999" stroke-width="2"/></svg>
      <svg viewBox="0 0 40 40"><circle cx="20" cy="20" r="18" fill="#efefe6" stroke="#777" stroke-width="2"/><path d="m12 12 16 16m0-16L12 28" stroke="#8c8c88" stroke-width="4"/></svg>
      <svg class="ime" viewBox="0 0 40 40"><path d="M2 6 32 1c4 0 4 2 4 5l3 24c0 3-1 4-4 5L10 39c-3 0-4-1-4-4L0 10c0-2 0-4 2-4Z" fill="#f1501c"/><path d="M30 9C18 4 8 10 12 17c5 5 17 3 16 9-2 6-12 5-17 1" fill="none" stroke="#fff" stroke-width="6"/></svg>
    </div>
    <div class="clock"><span>11:46</span><span>2025/5/2</span></div>
    <button class="notice" aria-label="Notifications"><svg viewBox="0 0 40 40"><path d="M0 0h40v22l-8 12h-8l-3 6-4-6H0Z"/><path d="M8 9h24M8 17h24M8 25h15" stroke="#e5e3d8" stroke-width="2"/><path d="M32 20c10 6 8 18-6 19 9-5 9-10 6-19Z" fill="#e5e3d8" stroke="#111" stroke-width="2"/></svg></button>
  </footer>
</body>
</html>
```
FILE: styles.css
```css
* {
  box-sizing: border-box;
}
body {
  margin: 0;
  height: 100vh;
  display: flex;
  flex-direction: column;
  overflow: hidden;
  background: #fff;
  color: #1f2328;
  font-family: "Noto Sans", "Noto Sans CJK SC", sans-serif;
  font-size: 33px;
  line-height: 52px;
}
a {
  color: inherit;
  text-decoration: none;
}
button, input {
  font: inherit;
  color: inherit;
  background: none;
  border: none;
  padding: 0;
}
button {
  cursor: pointer;
}
svg {
  display: block;
  flex-shrink: 0;
}
strong {
  font-weight: 600;
}
.sprite {
  width: 0;
  height: 0;
  position: absolute;
}
.icon {
  width: 40px;
  height: 40px;
  fill: #59636e;
}

/* letters inside icons */
.ue-letter { font: bold 28px "Liberation Sans", sans-serif; }
.se-letter { font: 28px "Liberation Sans", sans-serif; fill: #fff; }
.cast-letter { font: bold 16px "Liberation Sans", sans-serif; fill: #fff; }
.mfc-letter { font: bold 20px "Liberation Mono", monospace; }
.mfc-m { fill: #a5201c; }
.mfc-f { fill: #14632a; }
.mfc-c { fill: #173f9a; }
.r-letter { font: italic bold 38px "Liberation Sans", sans-serif; fill: #3d6ea5; }
.ai-letter { font: bold 24px "Liberation Sans", sans-serif; fill: #fff; stroke: none; }
.tr-zh { font: 13px "Noto Sans CJK SC", sans-serif; fill: #fff; stroke: none; }
.tr-en { font: bold 16px "Liberation Sans", sans-serif; fill: #555; stroke: none; }

/* browser window */
.tabstrip {
  height: 80px;
  flex-shrink: 0;
  display: flex;
  background: #e0e0e0;
}
.brand {
  width: 120px;
  display: flex;
  align-items: center;
  justify-content: center;
}
.brand svg {
  width: 58px;
  height: 58px;
}
.tab {
  width: 550px;
  padding: 0 30px;
  display: flex;
  align-items: center;
  background: #fff;
  border-radius: 12px 12px 0 0;
}
.tab-icon {
  width: 40px;
  height: 40px;
  fill: #1f2328;
  margin-right: 15px;
}
.tab-title {
  flex: 1;
  font-size: 30px;
  white-space: nowrap;
  mask-image: linear-gradient(to right, #000 88%, transparent);
}
.tab-close {
  margin-left: 22px;
}
.tab-close svg {
  width: 20px;
  height: 20px;
  stroke: #555;
  stroke-width: 3;
}
.new-tab {
  margin-left: 25px;
}
.new-tab svg {
  width: 30px;
  height: 30px;
  stroke: #555;
  stroke-width: 4;
}
.window-buttons {
  margin: 0 32px 10px auto;
  display: flex;
  align-items: center;
  gap: 64px;
}
.window-buttons svg {
  width: 36px;
  height: 36px;
  fill: none;
  stroke: #555;
  stroke-width: 2;
}
.tab-count {
  width: 36px;
  height: 40px;
  border: 2px solid #888;
  border-radius: 4px;
  font-size: 26px;
  line-height: 36px;
}
.toolbar {
  height: 95px;
  flex-shrink: 0;
  display: flex;
  align-items: center;
  padding: 0 44px 4px 35px;
  border-bottom: 2px solid #dfe3e8;
}
.toolbar svg {
  width: 40px;
  height: 40px;
  fill: none;
  stroke: #555;
  stroke-width: 4;
}
.toolbar .solid {
  fill: #555;
  stroke: none;
}
.toolbar .off svg {
  stroke: #b5b5b5;
}
.nav-buttons {
  width: 418px;
  display: flex;
  gap: 40px;
}
.address, .websearch {
  height: 70px;
  display: flex;
  align-items: center;
  background: #f1f1f1;
  border-radius: 8px;
}
.address {
  flex: 1807;
  padding: 0 29px;
  gap: 41px;
  margin-right: 21px;
}
.address .secure {
  width: 36px;
  stroke: none;
}
.url {
  flex: 1;
  margin-left: -10px;
  font-size: 36px;
  color: #888;
}
.scheme {
  color: #0cc44f;
}
.host {
  color: #1f2328;
}
.websearch {
  flex: 794;
  padding: 0 20px;
  gap: 18px;
}
.websearch svg {
  stroke: #333;
  stroke-width: 3;
}
.websearch input {
  flex: 1;
  font-size: 35px;
}
.websearch input::placeholder {
  color: #999;
}
.extensions {
  margin-left: 41px;
  display: flex;
  align-items: center;
  gap: 36px;
}
.extensions svg {
  stroke-linejoin: round;
}
.divider {
  width: 2px;
  height: 40px;
  margin: 0 -4px;
  background: #d4d4d4;
}

/* page */
.viewport {
  flex: 1;
  min-height: 0;
  display: flex;
  position: relative;
}
.page {
  flex: 1;
  min-width: 0;
  overflow: hidden;
}
.site-header {
  height: 172px;
  padding: 0 80px 4px;
  display: flex;
  align-items: center;
  background: #25292e;
  color: #fff;
  font-size: 37px;
}
.site-logo {
  width: 74px;
  height: 74px;
  fill: #fff;
  margin: 0 63px 4px 3px;
}
.site-nav {
  flex: 1;
  display: flex;
  gap: 40px;
}
.site-nav button {
  display: flex;
  align-items: center;
  gap: 11px;
}
.site-nav svg {
  width: 40px;
  height: 40px;
  fill: #8b9096;
}
.jump {
  width: 800px;
  height: 80px;
  margin: 0 60px 0 0;
  padding: 0 18px 0 20px;
  display: flex;
  align-items: center;
  gap: 20px;
  border: 2px solid #818b98;
  border-radius: 15px;
  font-size: 35px;
  color: #d0d3d6;
  text-align: left;
}
.jump span {
  flex: 1;
}
.jump kbd {
  width: 48px;
  height: 50px;
  border: 2px solid #59606a;
  border-radius: 8px;
  font: 28px/44px "Noto Sans", sans-serif;
  color: #9aa1a9;
  text-align: center;
}
.sign-in {
  font-size: 34px;
  margin-right: 60px;
}
.sign-up {
  height: 80px;
  padding: 0 29px;
  border: 2px solid #d1d9e0;
  border-radius: 15px;
  font-size: 34px;
  line-height: 76px;
}
.repo-header {
  height: 275px;
  padding: 40px 80px 0;
  display: flex;
  flex-direction: column;
  justify-content: space-between;
  background: #f6f8fa;
  border-bottom: 2px solid #d1d9e0;
}
.repo-top {
  display: flex;
  justify-content: space-between;
}
.repo-title {
  height: 76px;
  display: flex;
  align-items: center;
  font-size: 47px;
  color: #0969da;
}
.repo-title .icon {
  margin-right: 20px;
}
.slash {
  margin: 0 11px;
  color: #59636e;
}
.strong {
  font-weight: 600;
}
.visibility {
  height: 50px;
  margin-left: 20px;
  padding: 0 16px;
  border: 2px solid #d1d9e0;
  border-radius: 25px;
  font-size: 28px;
  font-weight: 500;
  line-height: 46px;
  color: #59636e;
}
.repo-actions {
  display: flex;
  gap: 20px;
  font-size: 28px;
  font-weight: 500;
}
.repo-actions a {
  height: 70px;
  padding: 0 30px;
  display: flex;
  align-items: center;
  gap: 20px;
  border: 2px solid #d1d9e0;
  border-radius: 15px;
}
.star-label {
  margin-left: 8px;
}
.counter {
  height: 50px;
  min-width: 50px;
  padding: 0 14px;
  border-radius: 25px;
  background: #e7eaef;
  line-height: 48px;
  text-align: center;
  margin-left: -6px;
}
.repo-tabs {
  display: flex;
  gap: 20px;
}
.repo-tabs a {
  height: 110px;
  padding: 0 20px;
  display: flex;
  align-items: center;
  gap: 22px;
  border-bottom: 5px solid transparent;
}
.repo-tabs .selected {
  border-color: #fd8c73;
  font-weight: 600;
}

.layout {
  max-width: 3200px;
  margin: 0 auto;
  padding: 60px 80px 0;
  display: grid;
  grid-template-columns: minmax(0, 1fr) 740px;
  gap: 60px;
}
.file-nav {
  display: flex;
  align-items: center;
  margin-bottom: 40px;
}
.branch-btn, .code-btn, .goto {
  height: 80px;
  display: flex;
  align-items: center;
  border: 2px solid #d1d9e0;
  border-radius: 15px;
}
.branch-btn {
  padding: 0 28px;
  gap: 20px;
  background: #f6f8fa;
  font-weight: 500;
  box-shadow: 0 3px 3px rgba(31, 35, 40, 0.05);
  margin-right: 32px;
}
.ref {
  display: flex;
  align-items: center;
  gap: 10px;
  margin-right: 20px;
  color: #59636e;
}
.ref strong {
  color: #1f2328;
}
.goto {
  width: 540px;
  margin: 0 40px 0 auto;
  padding: 0 30px;
  gap: 20px;
}
.goto input {
  flex: 1;
  min-width: 0;
}
.goto input::placeholder {
  color: #59636e;
  opacity: 1;
}
.code-btn {
  padding: 0 30px;
  gap: 20px;
  background: #1f883d;
  border-color: #1f7f3a;
  color: #fff;
  font-weight: 600;
}
.code-btn .icon {
  fill: #fff;
}
.files {
  border: 2px solid #d1d9e0;
  border-radius: 15px;
  overflow: hidden;
}
.commit {
  height: 132px;
  padding: 0 52px 0 30px;
  display: flex;
  align-items: center;
  background: #f6f8fa;
  border-bottom: 2px solid #d1d9e0;
}
.avatar {
  width: 54px;
  height: 54px;
  padding: 6px;
  border-radius: 50%;
  border: 2px solid #cfcfcf;
  background: #c8c8c8;
  margin-right: 18px;
}
.avatar svg {
  width: 38px;
  height: 38px;
  fill: #fff;
}
.author {
  font-weight: 600;
  margin-right: 20px;
}
.message {
  color: #59636e;
  margin-right: 35px;
}
.dots {
  border-radius: 4px;
  background: #59636e;
}
.dots svg {
  width: 40px;
  height: 20px;
  fill: #fff;
}
.sha {
  margin: 0 43px 0 auto;
  font-size: 28px;
  color: #59636e;
}
.commits {
  display: flex;
  align-items: center;
  gap: 10px;
  font-size: 28px;
  font-weight: 500;
}
table {
  width: 100%;
  table-layout: fixed;
  border-collapse: collapse;
}
td {
  height: 102px;
  padding: 0;
  border-bottom: 2px solid #d1d9e0;
  color: #59636e;
  white-space: nowrap;
}
td:first-child {
  width: 934px;
  padding-left: 40px;
  color: #1f2328;
}
td:last-child {
  width: 400px;
  padding-right: 40px;
  text-align: right;
}
td a {
  display: flex;
  align-items: center;
  gap: 24px;
}
h2 {
  margin: 0;
  font-size: 37px;
  font-weight: 600;
  line-height: 60px;
}
aside section {
  padding: 42px 0 38px;
  border-bottom: 2px solid #d1d9e0;
}
aside section:first-child {
  padding: 12px 0 30px;
}
aside section:last-child {
  border: none;
}
aside p {
  margin: 34px 0 0;
  font-size: 28px;
  line-height: 50px;
  color: #59636e;
}
aside .about {
  margin: 40px 0 30px;
  font-size: 37px;
  line-height: 60px;
  color: #1f2328;
}
ul {
  margin: 0;
  padding: 0;
  list-style: none;
  color: #59636e;
}
li {
  padding: 10px 0;
}
li a {
  display: flex;
  align-items: center;
  gap: 28px;
}
.lang-bar {
  height: 20px;
  margin: 38px 0 22px;
  border-radius: 10px;
  background: #555;
}
.lang {
  display: flex;
  align-items: center;
  gap: 30px;
  padding-left: 10px;
  font-size: 28px;
  line-height: 40px;
  color: #59636e;
}
.lang strong {
  color: #1f2328;
}
.lang-dot {
  width: 20px;
  height: 20px;
  border-radius: 50%;
  background: #555;
}

.scrollbar {
  width: 42px;
  display: flex;
  flex-direction: column;
  background: #f0f0f0;
}
.scrollbar svg {
  width: 42px;
  height: 42px;
  fill: #505050;
}
.thumb {
  height: 135px;
  margin: 0 2px;
  background: #c1c1c1;
}
.down {
  margin-top: auto;
}
/* floating speed meter over the scrollbar */
.meter {
  position: absolute;
  right: 8px;
  top: 50%;
  width: 18px;
  height: 146px;
  display: flex;
  align-items: flex-end;
  border-radius: 9px;
  background: #e8e8e8;
  overflow: hidden;
  transform: translateY(12px);
}
.meter-fill {
  width: 18px;
  height: 105px;
  background: linear-gradient(#00ef74, #0fcac0 55%, #1aa7ff);
}

/* taskbar */
.taskbar {
  height: 100px;
  flex-shrink: 0;
  display: flex;
  align-items: center;
  background: linear-gradient(to right, #ecdfca, #e9dfcc 10%, #e2e1d6 24%, #e9e0cd 34%, #e3e1d6 47%, #e8decf 57%, #e1e3dd 66%, #e8dfd0 80%, #e5e4d6 90%, #e2e2d8);
  color: #111;
}
.start {
  width: 138px;
  padding-left: 40px;
}
.start svg {
  width: 40px;
  height: 40px;
}
.apps {
  display: flex;
  gap: 20px;
  height: 100px;
}
.app {
  width: 76px;
  display: flex;
  align-items: center;
  justify-content: center;
  border-bottom: 5px solid transparent;
  border-top: 5px solid transparent;
}
.app.on {
  width: 93px;
  border-bottom-color: #0078d7;
}
/* first window of a group */
.app.first {
  margin-left: 3px;
}
.app svg {
  width: 60px;
  height: 60px;
}
.cpu, .clock {
  display: flex;
  flex-direction: column;
  align-items: center;
  font-size: 31px;
  line-height: 38px;
}
.cpu {
  width: 214px;
}
.weather {
  margin-left: 28px;
  display: flex;
  align-items: center;
  gap: 20px;
  font-size: 34px;
}
.weather svg {
  width: 60px;
  height: 60px;
}
.tray {
  flex: 1;
  margin-left: 62px;
  display: flex;
  align-items: center;
  gap: 20px;
}
.tray svg {
  width: 40px;
  height: 40px;
}
.tray .guard {
  margin-left: 60px;
}
.tray .ime {
  margin-left: 14px;
}
.clock {
  width: 180px;
  line-height: 46px;
}
.notice {
  width: 129px;
  height: 100px;
  padding: 0 8px 0 34px;
  margin-right: 8px;
  border-right: 2px solid #b9b9ac;
}
.notice svg {
  width: 40px;
  height: 40px;
}
```
